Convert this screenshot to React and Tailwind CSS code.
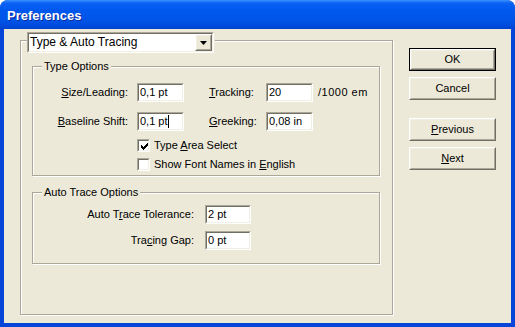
import React from 'react';

function Sunken({ className = '', children }) {
  return (
    <div className={`border border-t-[#ACA899] border-l-[#ACA899] border-r-white border-b-white ${className}`}>
      <div className="h-full border border-t-[#716F64] border-l-[#716F64] border-r-[#F1EFE2] border-b-[#F1EFE2] bg-white">
        {children}
      </div>
    </div>
  );
}

function Raised({ className = '', children }) {
  return (
    <div className={`border border-t-white border-l-white border-r-[#716F64] border-b-[#716F64] ${className}`}>
      <div className="h-full flex items-center justify-center border border-t-[#F1EFE2] border-l-[#F1EFE2] border-r-[#ACA899] border-b-[#ACA899] bg-[#ECE9D8]">
        {children}
      </div>
    </div>
  );
}

function Field({ value, caret, className = 'w-[47px]' }) {
  return (
    <Sunken className={`h-[19px] ${className}`}>
      <div className="flex items-center h-full pl-[1px] leading-[15px] whitespace-nowrap">
        {value}
        {caret && <span className="inline-block w-px h-[13px] bg-black" />}
      </div>
    </Sunken>
  );
}

function Check({ checked }) {
  return (
    <Sunken className="w-[13px] h-[13px] shrink-0">
      {checked && (
        <svg width="11" height="11" viewBox="0 0 11 11" className="block">
          <path d="M2 4h1v1h1v1h1V5h1V4h1V3h1V2h1v3H8v1H7v1H6v1H5v1H4V8H3V7H2z" fill="#000" />
        </svg>
      )}
    </Sunken>
  );
}

function Group({ legend, className = '', children }) {
  return (
    <div className={`border border-[#ACA899] shadow-[1px_1px_0_#fff,inset_1px_1px_0_#fff] ${className}`}>
      <div className="-mt-[7px] ml-[9px] w-fit bg-[#ECE9D8] px-[2px] leading-[13px]">{legend}</div>
      {children}
    </div>
  );
}

function U({ children }) {
  return <span className="underline underline-offset-[1px]">{children}</span>;
}

export default function App() {
  return (
    <div className="w-[515px] h-[327px] flex flex-col rounded-t-[8px] overflow-hidden bg-[#0744d8] text-[11px] text-black font-['Liberation_Sans',Arial,sans-serif]">
      {/* title bar */}
      <div className="h-[29px] shrink-0 flex items-center pt-[2px] pl-[7px] bg-[linear-gradient(180deg,#3d93ff_0px,#0b62f4_3px,#0058ee_10px,#0055e8_20px,#0048da_27px,#003ec8_29px)]">
        <span className="text-white font-bold text-[13px] [text-shadow:1px_1px_0_#0a2a9c]">Preferences</span>
      </div>

      {/* body */}
      <div className="flex-1 mx-[4px] mb-[4px] bg-[#ECE9D8] flex items-start">
        {/* outer group with combo legend */}
        <div className="ml-[16px] mt-[11px] w-[373px] h-[275px] border border-[#ACA899] shadow-[1px_1px_0_#fff,inset_1px_1px_0_#fff]">
          <div className="-mt-[9px] ml-[6px] w-fit bg-[#ECE9D8] pr-[1px]">
            <Sunken className="w-[187px] h-[21px]">
              <div className="flex h-full items-center">
                <span className="flex-1 pl-[1px] text-[12px] leading-[15px] whitespace-nowrap">Type &amp; Auto Tracing</span>
                <Raised className="w-[17px] h-[17px]">
                  <svg width="7" height="4" viewBox="0 0 7 4" className="block">
                    <path d="M0 0h7L3.5 4z" fill="#000" />
                  </svg>
                </Raised>
              </div>
            </Sunken>
          </div>

          <div className="ml-[11px] mt-[13px] w-[348px]">
            <Group legend="Type Options" className="h-[110px]">
              <div className="mt-[10px] flex items-center h-[19px]">
                <span className="w-[95px] text-right"><U>S</U>ize/Leading:</span>
                <Field value="0,1 pt" className="ml-[9px] w-[47px]" />
                <span className="ml-[25px] w-[57px]"><U>T</U>racking:</span>
                <Field value="20" className="w-[47px]" />
                <span className="ml-[5px] tracking-[0.5px]">/1000 em</span>
              </div>
              <div className="mt-[10px] flex items-center h-[19px]">
                <span className="w-[95px] text-right"><U>B</U>aseline Shift:</span>
                <Field value="0,1 pt" caret className="ml-[9px] w-[47px]" />
                <span className="ml-[25px] w-[57px]"><U>G</U>reeking:</span>
                <Field value="0,08 in" className="w-[47px]" />
              </div>
              <div className="mt-[8px] ml-[104px] flex items-center h-[13px]">
                <Check checked />
                <span className="ml-[4px]">Type <U>A</U>rea Select</span>
              </div>
              <div className="mt-[6px] ml-[104px] flex items-center h-[13px]">
                <Check />
                <span className="ml-[4px]">Show Font Names in <U>E</U>nglish</span>
              </div>
            </Group>

            <Group legend="Auto Trace Options" className="mt-[16px] h-[72px]">
              <div className="mt-[6px] flex items-center h-[19px]">
                <span className="w-[161px] text-right">Auto T<U>r</U>ace Tolerance:</span>
                <Field value="2 pt" className="ml-[11px] w-[46px]" />
              </div>
              <div className="mt-[7px] flex items-center h-[19px]">
                <span className="w-[161px] text-right">Tra<U>c</U>ing Gap:</span>
                <Field value="0 pt" className="ml-[11px] w-[46px]" />
              </div>
            </Group>
          </div>
        </div>

        {/* buttons */}
        <div className="ml-[16px] mt-[19px] flex flex-col">
          <div className="border border-black w-[87px] h-[23px]">
            <Raised className="h-full">OK</Raised>
          </div>
          <Raised className="mt-[6px] w-[87px] h-[23px]">Cancel</Raised>
          <Raised className="mt-[18px] w-[87px] h-[23px]"><U>P</U>revious</Raised>
          <Raised className="mt-[6px] w-[87px] h-[23px]"><U>N</U>ext</Raised>
        </div>
      </div>
    </div>
  );
}
